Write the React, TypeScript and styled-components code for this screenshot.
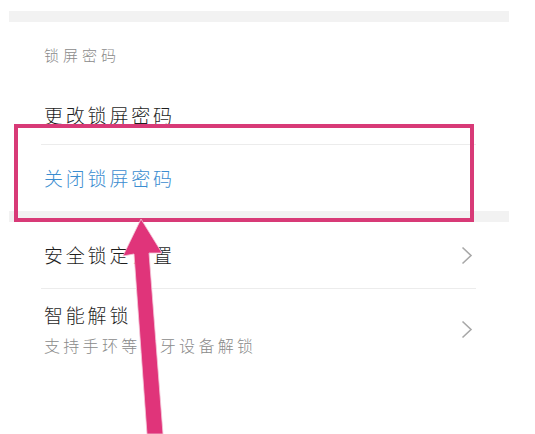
import React from "react";
import styled, { createGlobalStyle } from "styled-components";

const Global = createGlobalStyle`
  html, body { margin: 0; padding: 0; background: #ffffff; }
  body { font-family: "Noto Sans CJK SC", "Noto Sans", sans-serif; }
`;

const Page = styled.div`
  position: relative;
  width: 535px;
  height: 434px;
  overflow: hidden;
  background: #ffffff;
  padding-top: 11px;
  box-sizing: border-box;
`;

const GapBar = styled.div`
  height: 11px;
  margin-left: 9px;
  width: 500px;
  background: #f2f2f2;
`;

const SectionTitle = styled.div`
  height: 64px;
  box-sizing: border-box;
  padding: 23px 0 0 44px;
  font-size: 15px;
  line-height: 20px;
  letter-spacing: 4px;
  color: #8a8a8a;
  font-weight: 300;
`;

const Row = styled.div<{ $h: number }>`
  height: ${(p) => p.$h}px;
  display: flex;
  align-items: center;
  justify-content: space-between;
  padding: 0 62px 0 44px;
  box-sizing: border-box;
`;

const RowText = styled.div`
  display: flex;
  flex-direction: column;
  gap: 11px;
`;

const Title = styled.span<{ $blue?: boolean }>`
  font-size: 19px;
  line-height: 20px;
  letter-spacing: 2.8px;
  font-weight: 300;
  color: ${(p) => (p.$blue ? "#3b8dd0" : "#1e1e1e")};
`;

const Sub = styled.span`
  font-size: 16px;
  line-height: 18px;
  letter-spacing: 3.3px;
  font-weight: 300;
  color: #8a8a8a;
`;

const Divider = styled.div`
  height: 1px;
  margin-left: 41px;
  width: 435px;
  background: #ececec;
`;

const Highlight = styled.div`
  position: absolute;
  left: 14px;
  top: 124px;
  width: 460px;
  height: 98px;
  box-sizing: border-box;
  border: 4px solid #d83a77;
`;

const ArrowSvg = styled.svg`
  position: absolute;
  left: 0;
  top: 0;
`;

const Chevron = () => (
  <svg width="12" height="19" viewBox="0 0 12 19">
    <polyline points="1.5,1.5 10,9.5 1.5,17.5" fill="none" stroke="#a8a8a8" strokeWidth="1.6" />
  </svg>
);

export default function App() {
  return (
    <>
      <Global />
      <Page>
        <GapBar />
        <SectionTitle>锁屏密码</SectionTitle>
        <Row $h={58}>
          <Title>更改锁屏密码</Title>
        </Row>
        <Divider />
        <Row $h={66}>
          <Title $blue>关闭锁屏密码</Title>
        </Row>
        <GapBar />
        <Row $h={66}>
          <Title>安全锁定设置</Title>
          <Chevron />
        </Row>
        <Divider />
        <Row $h={80}>
          <RowText>
            <Title>智能解锁</Title>
            <Sub>支持手环等蓝牙设备解锁</Sub>
          </RowText>
          <Chevron />
        </Row>
        <Highlight />
        <ArrowSvg width="535" height="434" viewBox="0 0 535 434">
          <polygon
            points="141,219 162,253 149,253 163,434 147,434 134,254 123,256"
            fill="#e0347a"
            stroke="#f4c6d8"
            strokeWidth="0.8"
            strokeLinejoin="miter"
          />
        </ArrowSvg>
      </Page>
    </>
  );
}
